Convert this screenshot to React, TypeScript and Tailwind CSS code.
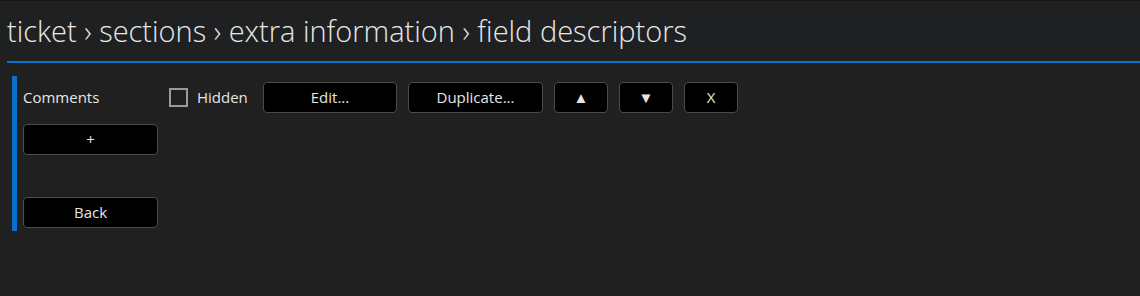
import { useState } from "react"

function Btn({ label, className }: { label: string; className: string }) {
  return (
    <button
      className={`flex items-center justify-center h-[31px] rounded-[4px] border border-[#4b4b4b] bg-black text-[15px] text-[#e6e6e6] ${className}`}
    >
      {label}
    </button>
  )
}

export default function App() {
  const [hidden, setHidden] = useState(false)

  return (
    <div
      className="w-[1140px] h-[296px] bg-[#202020] text-[#e6e6e6] border-t border-[#161616] overflow-hidden"
      style={{ fontFamily: '"Open Sans", "Noto Sans", sans-serif' }}
    >
      <div className="h-[60px] bg-[#1f2022] pl-[7px] flex items-center">
        <h1 className="text-[29px] font-light leading-none text-[#e8e8e8] -mt-[2px]">
          ticket › sections › extra information › field descriptors
        </h1>
      </div>
      <div className="ml-[7px] h-[2px] bg-[#0a6fc9]" />

      <div className="mt-[13px] ml-[12px] flex">
        <div className="w-[5px] h-[155px] bg-[#0a6fc9]" />
        <div className="pl-[6px] flex gap-[11px]">
          <div className="flex flex-col w-[135px]">
            <div className="h-[48px] flex items-start pt-[10px] text-[15px]">Comments</div>
            <Btn label="+" className="w-[135px]" />
            <Btn label="Back" className="w-[135px] mt-[42px]" />
          </div>
          <div className="flex items-start pt-[6px] gap-[11px]">
            <label className="flex items-center w-[83px] h-[31px] gap-[9px] text-[15px] cursor-pointer">
              <span
                onClick={() => setHidden(!hidden)}
                className="w-[19px] h-[19px] border-2 border-[#9a9a9a] bg-transparent"
              />
              Hidden
            </label>
            <Btn label="Edit..." className="w-[134px]" />
            <Btn label="Duplicate..." className="w-[135px]" />
            <Btn label="▲" className="w-[54px] text-[14px] text-[#d0d0d0]" />
            <Btn label="▼" className="w-[54px] text-[14px] text-[#d0d0d0]" />
            <Btn label="X" className="w-[54px]" />
          </div>
        </div>
      </div>
    </div>
  )
}
